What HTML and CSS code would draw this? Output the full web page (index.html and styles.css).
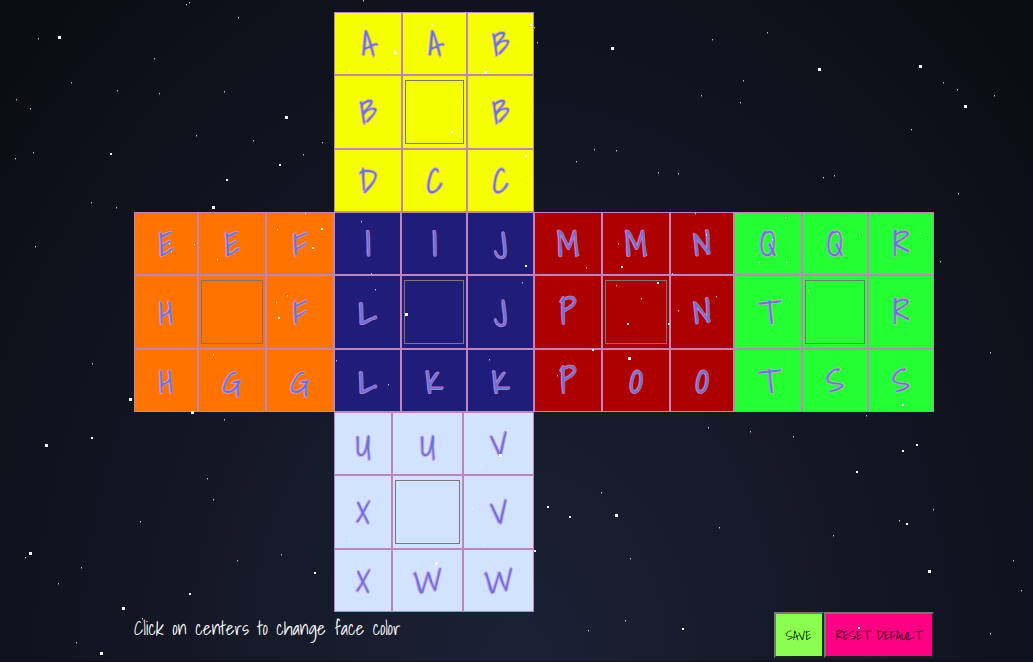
FILE: index.html
```html
<!DOCTYPE html>
<html lang="en">
<head>
<meta charset="utf-8">
<meta name="viewport" content="width=device-width, initial-scale=1">
<title>Cube lettering</title>
<link rel="stylesheet" href="styles.css">
</head>
<body>
<main class="page">
  <div class="net">
    <table class="face face-up">
      <colgroup><col class="w68"><col class="w65"><col class="w67"></colgroup>
      <tr><td>A</td><td>A</td><td>B</td></tr>
      <tr class="mid"><td>B</td><td class="center"><input type="color" value="#f6ff00" aria-label="Up face color"></td><td>B</td></tr>
      <tr><td>D</td><td>C</td><td>C</td></tr>
    </table>
    <table class="face face-left">
      <colgroup><col class="w64"><col class="w68"><col class="w68"></colgroup>
      <tr><td>E</td><td>E</td><td>F</td></tr>
      <tr class="mid"><td>H</td><td class="center"><input type="color" value="#ff7300" aria-label="Left face color"></td><td>F</td></tr>
      <tr><td>H</td><td>G</td><td>G</td></tr>
    </table>
    <table class="face face-front">
      <colgroup><col class="w67"><col class="w66"><col class="w67"></colgroup>
      <tr><td>I</td><td>I</td><td>J</td></tr>
      <tr class="mid"><td>L</td><td class="center"><input type="color" value="#1f1c7a" aria-label="Front face color"></td><td>J</td></tr>
      <tr><td>L</td><td>K</td><td>K</td></tr>
    </table>
    <table class="face face-right">
      <colgroup><col class="w68"><col class="w68"><col class="w64"></colgroup>
      <tr><td>M</td><td>M</td><td>N</td></tr>
      <tr class="mid"><td>P</td><td class="center"><input type="color" value="#ad0000" aria-label="Right face color"></td><td>N</td></tr>
      <tr><td>P</td><td>O</td><td>O</td></tr>
    </table>
    <table class="face face-back">
      <colgroup><col class="w68"><col class="w66"><col class="w66"></colgroup>
      <tr><td>Q</td><td>Q</td><td>R</td></tr>
      <tr class="mid"><td>T</td><td class="center"><input type="color" value="#24ff33" aria-label="Back face color"></td><td>R</td></tr>
      <tr><td>T</td><td>S</td><td>S</td></tr>
    </table>
    <table class="face face-down">
      <colgroup><col class="w58"><col class="w71"><col class="w71"></colgroup>
      <tr><td>U</td><td>U</td><td>V</td></tr>
      <tr class="mid"><td>X</td><td class="center"><input type="color" value="#d2e3ff" aria-label="Down face color"></td><td>V</td></tr>
      <tr><td>X</td><td>W</td><td>W</td></tr>
    </table>
  </div>
  <div class="bar">
    <p class="hint">Click on centers to change face color</p>
    <div class="actions">
      <button type="button" class="btn save">SAVE</button>
      <button type="button" class="btn reset">RESET DEFAULT</button>
    </div>
  </div>
</main>
<svg class="stars" aria-hidden="true" shape-rendering="crispEdges">
  <defs>
    <path id="small" d="M186 4h1M189 2h1M238 17h1M38 38h1M154 58h1M71 82h1M117 90h1M159 93h1M224 91h1M16 99h1M30 108h1M196 135h1M253 140h1M322 142h1M303 154h1M33 152h1M15 158h1M91 202h1M116 207h1M534 27h1M537 42h1M712 39h1M767 32h1M743 80h1M701 95h1M740 102h1M943 82h1M957 89h1M994 95h1M911 129h1M594 149h1M616 150h1M576 161h1M658 172h1M678 173h1M823 177h1M834 175h1M958 193h1M224 419h1M207 478h1M213 499h1M140 521h1M25 557h1M81 567h1M58 583h1M237 560h1M281 554h1M76 642h1M142 618h1M866 415h1M708 427h1M750 431h1M793 436h1M601 492h1M719 527h1M833 535h1M899 520h1M933 509h1M630 558h1M1013 560h1M1021 590h1M625 620h1M588 630h1M990 633h1M791 625h1M363 0h1M432 24h1M342 70h1M349 70h1M387 66h1M515 41h1M458 102h1M480 105h1M521 183h1M194 244h1M217 259h1M277 229h1M305 213h1M169 243h1M171 251h1M287 295h1M276 302h1M213 354h1M336 360h1M361 221h1M371 273h1M375 289h1M522 282h1M489 359h1M388 384h1M618 243h1M586 267h1M695 213h1M706 234h1M672 273h1M616 285h1M641 298h1M678 310h1M716 296h1M557 375h1M785 217h1M862 232h1M920 233h1M837 233h1M772 239h1M759 262h1M786 262h1M789 297h1M808 290h1M940 261h1M481 465h1M472 508h1M484 545h1M349 538h1M35 246h1M92 363h1M990 352h1"/>
  </defs>
  <g transform="translate(0 .5)">
    <use href="#small" class="dot"/>
    <use href="#small" class="dot faint" y="1"/>
  </g>
  <path class="medium" d="M110 154h2M279 165h2M226 180h2M91 438h2M314 573h2M189 594h2M916 445h2M902 451h2M856 472h2M547 507h2M569 517h2M906 524h2M534 551h2M682 629h2M858 628h2M530 25h2M451 132h2M525 156h2M321 229h2M312 248h2M278 318h2M525 266h2M621 267h2M657 283h2M627 324h2M668 324h2M592 350h2M902 405h2"/>
  <path class="large" transform="translate(0 1.5)" d="M58 36h3M285 116h3M212 206h3M611 47h3M818 68h3M919 65h3M964 105h3M45 444h3M191 411h3M29 552h3M122 607h3M100 652h3M615 514h3M928 570h3M394 51h3M484 71h3M129 398h3M405 313h3M628 357h3M499 454h3M435 562h3"/>
</svg>
</body>
</html>
```

FILE: styles.css
```css
* {
  box-sizing: border-box;
}

body {
  margin: 0;
  color: #fff;
  font-family: "Shadows Into Light", "Liberation Sans Narrow", "Liberation Sans", sans-serif;
}

.page {
  min-height: 100vh;
  padding: 12px 99px 0 134px;
  background: radial-gradient(ellipse at bottom, #1b2236 0%, #0b0b12 100%);
  border-bottom: 1px solid #120818;
}

.net {
  display: grid;
  grid-template-columns: repeat(4, 1fr);
  grid-template-areas:
    ". up . ."
    "left front right back"
    ". down . .";
}

.face {
  width: 100%;
  table-layout: fixed;
  border-collapse: separate;
  border-spacing: 0;
}

.face-up { grid-area: up; background: #f6ff00; }
.face-left { grid-area: left; background: #ff7300; }
.face-front { grid-area: front; background: #1f1c7a; }
.face-right { grid-area: right; background: #ad0000; }
.face-back { grid-area: back; background: #24ff33; }
.face-down { grid-area: down; background: #d2e3ff; }

.w58 { width: 58px; }
.w64 { width: 64px; }
.w65 { width: 65px; }
.w66 { width: 66px; }
.w67 { width: 67px; }
.w68 { width: 68px; }
.w71 { width: 71px; }

.face td {
  height: 63px;
  padding: 0;
  border: 1px solid #c084bc;
  color: #6076dc;
  font-size: 33px;
  line-height: 40px;
  text-align: center;
  -webkit-text-stroke: 2px rgba(216, 150, 228, 0.8);
  paint-order: stroke fill;
}

.face .mid td {
  height: 74px;
}

.face .center {
  padding: 0 2px;
}

.center input {
  appearance: none;
  display: block;
  width: 100%;
  height: 64px;
  padding: 0;
  border: 0;
  background: none;
  cursor: pointer;
}

.center input::-webkit-color-swatch-wrapper {
  padding: 0;
}

.center input::-webkit-color-swatch {
  border: 1px solid #777;
}

.bar {
  display: flex;
  justify-content: space-between;
  align-items: flex-start;
}

.hint {
  margin: 0;
  padding-top: 4px;
  font-size: 19px;
  line-height: 24px;
}

.actions {
  display: flex;
}

.btn {
  height: 46px;
  padding: 0 10px;
  border: 2px solid;
  border-color: #767676 #212121 #212121 #767676;
  color: #000;
  font-family: inherit;
  line-height: 20px;
  cursor: pointer;
}

.save { min-width: 50px; background: #8aff4f; }
.reset { min-width: 110px; background: #ff0084; }

.stars {
  position: absolute;
  top: 0;
  left: 0;
  width: 100%;
  height: 100%;
  pointer-events: none;
}

.dot {
  stroke: #fff;
  stroke-width: 1px;
  opacity: 0.75;
}

.faint {
  opacity: 0.3;
}

.medium {
  stroke: #fff;
  stroke-width: 2px;
}

.large {
  stroke: #fff;
  stroke-width: 3px;
}
```
